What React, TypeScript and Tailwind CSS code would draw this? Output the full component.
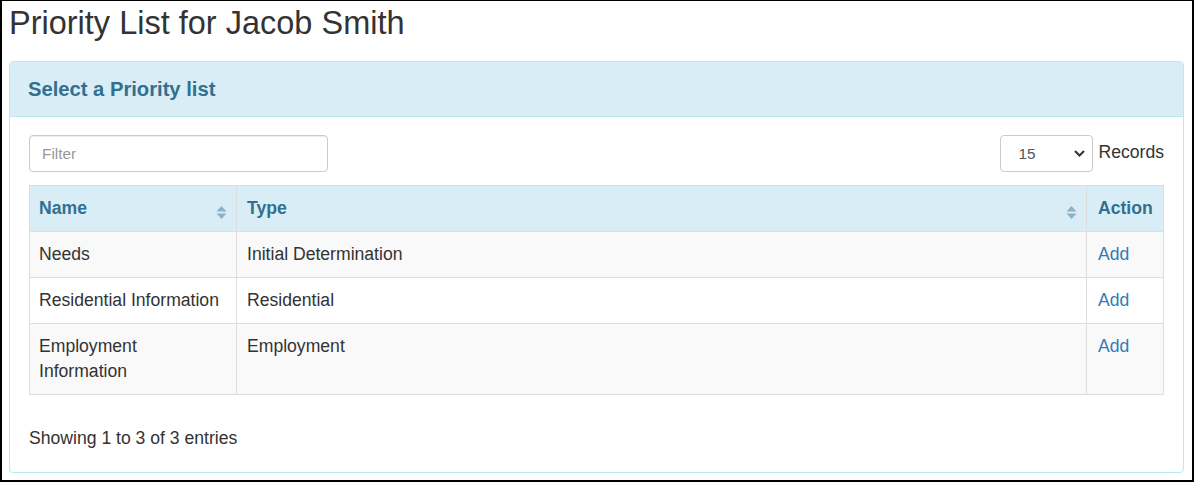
import React from "react";

const rows = [
  { name: "Needs", type: "Initial Determination", bg: "bg-[#f9f9f9]" },
  { name: "Residential Information", type: "Residential", bg: "bg-white" },
  { name: "Employment Information", type: "Employment", bg: "bg-[#f9f9f9]" },
];

function SortIcon() {
  return (
    <svg width="11" height="13" viewBox="0 0 11 13" className="shrink-0">
      <path d="M0.5 5.5 L5.5 0 L10.5 5.5 Z" fill="#8db2c7" />
      <path d="M0.5 7.5 L5.5 13 L10.5 7.5 Z" fill="#8db2c7" />
    </svg>
  );
}

export default function App() {
  return (
    <div
      className="w-[1194px] h-[482px] box-border border-black border-t border-l-2 border-r-2 border-b-2 bg-white text-[#333] overflow-hidden"
      style={{ fontFamily: '"Liberation Sans", Arial, sans-serif' }}
    >
      <div className="pl-[7px]">
        <h1 className="mt-[5px] mb-[20px] text-[32.5px] leading-[35px] font-normal text-[#333]">
          Priority List for Jacob Smith
        </h1>

        <div className="w-[1175px] border border-[#bce8f1] rounded-[4px] bg-white">
          <div className="h-[55px] box-border flex items-center px-[18px] bg-[#d9edf7] border-b border-[#bce8f1] rounded-t-[3px]">
            <h2 className="text-[20.2px] leading-[22px] font-bold text-[#31708f] -mt-[1px]">
              Select a Priority list
            </h2>
          </div>

          <div className="px-[19px] pt-[18px] pb-[21px]">
            <div className="flex items-center justify-between">
              <input
                type="text"
                placeholder="Filter"
                className="w-[299px] h-[37px] box-border border border-[#ccc] rounded-[4px] px-[12px] text-[15.4px] text-[#555] placeholder:text-[#999] outline-none shadow-[inset_0_1px_1px_rgba(0,0,0,0.075)]"
                style={{ fontFamily: '"Liberation Sans", Arial, sans-serif' }}
              />
              <div className="flex items-center gap-[5px]">
                <div className="relative w-[93px] h-[37px]">
                  <select
                    defaultValue="15"
                    className="appearance-none w-full h-full box-border border border-[#ccc] rounded-[4px] pl-[17px] text-[15.4px] text-[#555] bg-white outline-none"
                    style={{ fontFamily: '"Liberation Sans", Arial, sans-serif' }}
                  >
                    <option value="10">10</option>
                    <option value="15">15</option>
                    <option value="25">25</option>
                    <option value="50">50</option>
                  </select>
                  <svg
                    width="11"
                    height="7"
                    viewBox="0 0 11 7"
                    className="absolute right-[8px] top-[15px] pointer-events-none"
                  >
                    <path d="M1 1 L5.5 5.5 L10 1" fill="none" stroke="#333" strokeWidth="2" />
                  </svg>
                </div>
                <span className="text-[17.6px] leading-[25px] mb-[3px]">Records</span>
              </div>
            </div>

            <div className="mt-[13px] w-[1135px] border-l border-t border-[#ddd] text-[17.6px] leading-[25px]">
              <div className="grid grid-cols-[207px_850px_77px] bg-[#d9edf7] text-[#31708f] font-bold">
                <div className="flex items-center justify-between pl-[9px] pr-[9px] py-[10px] border-r border-b border-[#ddd]">
                  <span>Name</span>
                  <span className="mt-[7px]">
                    <SortIcon />
                  </span>
                </div>
                <div className="flex items-center justify-between pl-[10px] pr-[9px] py-[10px] border-r border-b border-[#ddd]">
                  <span>Type</span>
                  <span className="mt-[7px]">
                    <SortIcon />
                  </span>
                </div>
                <div className="pl-[11px] py-[10px] border-r border-b border-[#ddd]">Action</div>
              </div>
              {rows.map((r) => (
                <div key={r.name} className={`grid grid-cols-[207px_850px_77px] ${r.bg}`}>
                  <div className="pl-[9px] pr-[9px] py-[10px] border-r border-b border-[#ddd]">{r.name}</div>
                  <div className="pl-[10px] py-[10px] border-r border-b border-[#ddd]">{r.type}</div>
                  <div className="pl-[11px] py-[10px] border-r border-b border-[#ddd]">
                    <a href="#" className="text-[#337ab7] no-underline">
                      Add
                    </a>
                  </div>
                </div>
              ))}
            </div>

            <div className="mt-[31px] text-[17.6px] leading-[25px]">Showing 1 to 3 of 3 entries</div>
          </div>
        </div>
      </div>
    </div>
  );
}
